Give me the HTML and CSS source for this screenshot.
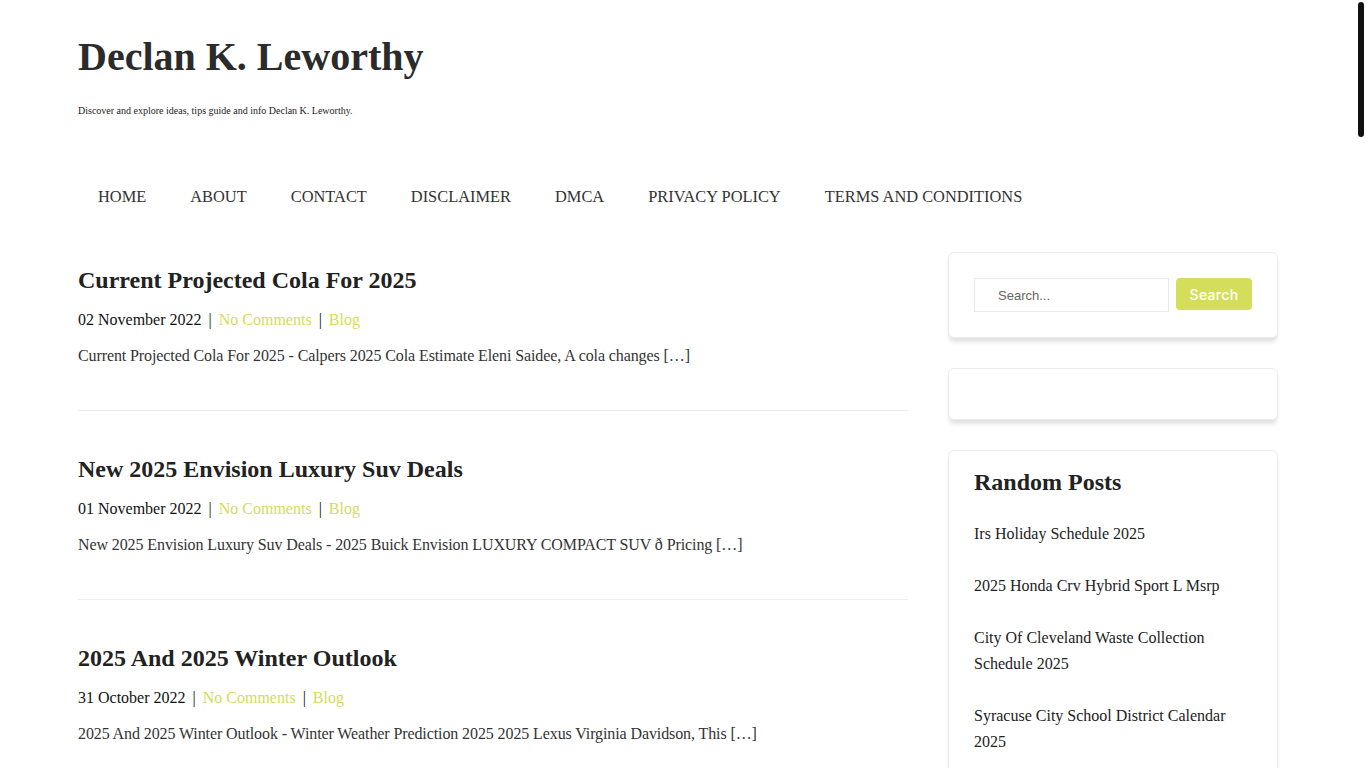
FILE: index.html
```html
<!DOCTYPE html>
<html lang="en">
<head>
<meta charset="utf-8">
<title>Declan K. Leworthy</title>
<link rel="stylesheet" href="styles.css">
</head>
<body>
<div class="scroll-thumb" aria-hidden="true"></div>
<div class="container">
  <header class="site-header">
    <h1 class="site-title">Declan K. Leworthy</h1>
    <p class="site-desc">Discover and explore ideas, tips guide and info Declan K. Leworthy.</p>
  </header>
  <nav class="main-nav">
    <ul>
      <li><a href="#">HOME</a></li>
      <li><a href="#">ABOUT</a></li>
      <li><a href="#">CONTACT</a></li>
      <li><a href="#">DISCLAIMER</a></li>
      <li><a href="#">DMCA</a></li>
      <li><a href="#">PRIVACY POLICY</a></li>
      <li><a href="#">TERMS AND CONDITIONS</a></li>
    </ul>
  </nav>
  <div class="content">
    <main class="posts">
      <article class="post">
        <h2 class="post-title">Current Projected Cola For 2025</h2>
        <div class="meta">02 November 2022 <span class="sep">|</span> <a href="#">No Comments</a> <span class="sep">|</span> <a href="#">Blog</a></div>
        <p class="excerpt">Current Projected Cola For 2025 - Calpers 2025 Cola Estimate Eleni Saidee, A cola changes […]</p>
      </article>
      <article class="post">
        <h2 class="post-title">New 2025 Envision Luxury Suv Deals</h2>
        <div class="meta">01 November 2022 <span class="sep">|</span> <a href="#">No Comments</a> <span class="sep">|</span> <a href="#">Blog</a></div>
        <p class="excerpt">New 2025 Envision Luxury Suv Deals - 2025 Buick Envision LUXURY COMPACT SUV ð Pricing […]</p>
      </article>
      <article class="post">
        <h2 class="post-title">2025 And 2025 Winter Outlook</h2>
        <div class="meta">31 October 2022 <span class="sep">|</span> <a href="#">No Comments</a> <span class="sep">|</span> <a href="#">Blog</a></div>
        <p class="excerpt">2025 And 2025 Winter Outlook - Winter Weather Prediction 2025 2025 Lexus Virginia Davidson, This […]</p>
      </article>
      <article class="post">
        <h2 class="post-title">Irs Holiday Schedule 2025</h2>
        <div class="meta">30 October 2022 <span class="sep">|</span> <a href="#">No Comments</a> <span class="sep">|</span> <a href="#">Blog</a></div>
        <p class="excerpt">Irs Holiday Schedule 2025 - Federal Holiday Calendar 2025 Printable, Here is the list […]</p>
      </article>
      <article class="post">
        <h2 class="post-title">2025 Honda Crv Hybrid Sport L Msrp</h2>
        <div class="meta">29 October 2022 <span class="sep">|</span> <a href="#">No Comments</a> <span class="sep">|</span> <a href="#">Blog</a></div>
        <p class="excerpt">2025 Honda Crv Hybrid Sport L Msrp - 2025 Honda CRV Hybrid Sport Touring Review […]</p>
      </article>
      <article class="post">
        <h2 class="post-title">City Of Cleveland Waste Collection Schedule 2025</h2>
        <div class="meta">28 October 2022 <span class="sep">|</span> <a href="#">No Comments</a> <span class="sep">|</span> <a href="#">Blog</a></div>
        <p class="excerpt">City Of Cleveland Waste Collection Schedule 2025 - Recycling and trash pickup dates […]</p>
      </article>
      <article class="post">
        <h2 class="post-title">Syracuse City School District Calendar 2025</h2>
        <div class="meta">27 October 2022 <span class="sep">|</span> <a href="#">No Comments</a> <span class="sep">|</span> <a href="#">Blog</a></div>
        <p class="excerpt">Syracuse City School District Calendar 2025 - School year dates and holidays […]</p>
      </article>
      <article class="post">
        <h2 class="post-title">Best Family Cars Of 2025</h2>
        <div class="meta">26 October 2022 <span class="sep">|</span> <a href="#">No Comments</a> <span class="sep">|</span> <a href="#">Blog</a></div>
        <p class="excerpt">Best Family Cars Of 2025 - Top picks for space, safety and value […]</p>
      </article>
      <article class="post">
        <h2 class="post-title">2025 Toyota Camry Release Date</h2>
        <div class="meta">25 October 2022 <span class="sep">|</span> <a href="#">No Comments</a> <span class="sep">|</span> <a href="#">Blog</a></div>
        <p class="excerpt">2025 Toyota Camry Release Date - All new redesign expected to arrive […]</p>
      </article>
      <article class="post">
        <h2 class="post-title">Social Security Increase 2025 Estimate</h2>
        <div class="meta">24 October 2022 <span class="sep">|</span> <a href="#">No Comments</a> <span class="sep">|</span> <a href="#">Blog</a></div>
        <p class="excerpt">Social Security Increase 2025 Estimate - What retirees can expect next year […]</p>
      </article>
      <article class="post">
        <h2 class="post-title">2025 Ford Bronco Raptor Price</h2>
        <div class="meta">23 October 2022 <span class="sep">|</span> <a href="#">No Comments</a> <span class="sep">|</span> <a href="#">Blog</a></div>
        <p class="excerpt">2025 Ford Bronco Raptor Price - Pricing, trims and specifications […]</p>
      </article>
      <article class="post">
        <h2 class="post-title">Nfl Draft 2025 Location</h2>
        <div class="meta">22 October 2022 <span class="sep">|</span> <a href="#">No Comments</a> <span class="sep">|</span> <a href="#">Blog</a></div>
        <p class="excerpt">Nfl Draft 2025 Location - Host city announced for the upcoming draft […]</p>
      </article>
      <article class="post">
        <h2 class="post-title">2025 Calendar With Holidays Printable</h2>
        <div class="meta">21 October 2022 <span class="sep">|</span> <a href="#">No Comments</a> <span class="sep">|</span> <a href="#">Blog</a></div>
        <p class="excerpt">2025 Calendar With Holidays Printable - Free monthly templates […]</p>
      </article>
      <article class="post">
        <h2 class="post-title">Chinese New Year 2025 Animal</h2>
        <div class="meta">20 October 2022 <span class="sep">|</span> <a href="#">No Comments</a> <span class="sep">|</span> <a href="#">Blog</a></div>
        <p class="excerpt">Chinese New Year 2025 Animal - The year of the snake begins […]</p>
      </article>
      <article class="post">
        <h2 class="post-title">2025 Kia Telluride Redesign</h2>
        <div class="meta">19 October 2022 <span class="sep">|</span> <a href="#">No Comments</a> <span class="sep">|</span> <a href="#">Blog</a></div>
        <p class="excerpt">2025 Kia Telluride Redesign - Exterior and interior changes […]</p>
      </article>
      <article class="post">
        <h2 class="post-title">Fafsa Deadline 2025 2026</h2>
        <div class="meta">18 October 2022 <span class="sep">|</span> <a href="#">No Comments</a> <span class="sep">|</span> <a href="#">Blog</a></div>
        <p class="excerpt">Fafsa Deadline 2025 2026 - Important dates for students […]</p>
      </article>
      <article class="post">
        <h2 class="post-title">2025 Gmc Sierra Denali Ultimate</h2>
        <div class="meta">17 October 2022 <span class="sep">|</span> <a href="#">No Comments</a> <span class="sep">|</span> <a href="#">Blog</a></div>
        <p class="excerpt">2025 Gmc Sierra Denali Ultimate - Luxury pickup features […]</p>
      </article>
      <article class="post">
        <h2 class="post-title">Easter Sunday 2025 Date</h2>
        <div class="meta">16 October 2022 <span class="sep">|</span> <a href="#">No Comments</a> <span class="sep">|</span> <a href="#">Blog</a></div>
        <p class="excerpt">Easter Sunday 2025 Date - When Easter falls next year […]</p>
      </article>
      <article class="post">
        <h2 class="post-title">2025 Subaru Outback Wilderness</h2>
        <div class="meta">15 October 2022 <span class="sep">|</span> <a href="#">No Comments</a> <span class="sep">|</span> <a href="#">Blog</a></div>
        <p class="excerpt">2025 Subaru Outback Wilderness - Off-road ready wagon […]</p>
      </article>
      <article class="post">
        <h2 class="post-title">Federal Pay Raise 2025 Chart</h2>
        <div class="meta">14 October 2022 <span class="sep">|</span> <a href="#">No Comments</a> <span class="sep">|</span> <a href="#">Blog</a></div>
        <p class="excerpt">Federal Pay Raise 2025 Chart - GS pay scale tables […]</p>
      </article>
    </main>
    <aside class="sidebar">
      <div class="widget search-widget">
        <form class="search-form">
          <input class="search-input" type="text" placeholder="Search...">
          <button class="search-btn" type="button">Search</button>
        </form>
      </div>
      <div class="widget empty-widget"></div>
      <div class="widget random-widget">
        <h3 class="widget-title">Random Posts</h3>
        <ul class="random-list">
          <li><a href="#">Irs Holiday Schedule 2025</a></li>
          <li><a href="#">2025 Honda Crv Hybrid Sport L Msrp</a></li>
          <li><a href="#">City Of Cleveland Waste Collection Schedule 2025</a></li>
          <li><a href="#">Syracuse City School District Calendar 2025</a></li>
          <li><a href="#">Best Family Cars Of 2025</a></li>
        </ul>
      </div>
    </aside>
  </div>
</div>
</body>
</html>
```
FILE: styles.css
```css
html {
  background: #fff;
}
body {
  margin: 0 10px 0 0;
  font-family: "Liberation Serif", "Times New Roman", serif;
  color: #222;
  background: #fff;
}
a {
  text-decoration: none;
}
.scroll-thumb {
  position: fixed;
  top: 2px;
  right: 2px;
  width: 6px;
  height: 135px;
  background: #111;
  border-radius: 3px;
  z-index: 10;
}
.container {
  width: 1200px;
  margin: 0 auto;
}
.site-header {
  padding-top: 34px;
}
.site-title {
  margin: 0;
  font-size: 40px;
  line-height: 46px;
  font-weight: bold;
  color: #2b2b2b;
}
.site-desc {
  margin: 24px 0 0;
  font-size: 10px;
  line-height: 14px;
  color: #222;
}
.main-nav {
  margin-top: 67px;
}
.main-nav ul {
  list-style: none;
  margin: 0 0 0 -2px;
  padding: 0;
  display: flex;
}
.main-nav li a {
  display: block;
  padding: 0 22px;
  line-height: 24px;
  font-size: 16.4px;
  color: #333;
}
.content {
  display: flex;
  gap: 40px;
  margin-top: 42px;
  align-items: flex-start;
}
.posts {
  width: 830px;
  flex: none;
}
.post {
  padding: 14px 0 42px;
  border-bottom: 1px solid #eeeeee;
  margin-bottom: 29px;
}
.post-title {
  margin: 0;
  font-size: 24px;
  line-height: 30px;
  font-weight: bold;
  color: #222;
}
.meta {
  margin-top: 13px;
  font-size: 16px;
  line-height: 24px;
  color: #111;
}
.meta a {
  color: #d3dc5a;
}
.meta .sep {
  margin: 0 3px;
  color: #111;
}
.excerpt {
  margin: 12px 0 0;
  font-size: 16px;
  line-height: 24px;
  letter-spacing: -0.1px;
  color: #333;
}
.sidebar {
  width: 330px;
  flex: none;
  margin-top: 1px;
  display: flex;
  flex-direction: column;
  gap: 30px;
}
.widget {
  border: 1px solid #ececec;
  border-radius: 6px;
  background: #fff;
  box-shadow: 0 5px 4px -1px rgba(0, 0, 0, 0.12);
  box-sizing: border-box;
}
.search-widget {
  padding: 25px;
  height: 86px;
}
.search-form {
  display: flex;
  gap: 7px;
  align-items: flex-start;
}
.search-input {
  width: 195px;
  height: 34px;
  box-sizing: border-box;
  border: 1px solid #ebebeb;
  padding: 0 0 0 23px;
  font-family: "Liberation Sans", Arial, sans-serif;
  font-size: 13px;
  color: #333;
  outline: none;
}
.search-input::placeholder {
  color: #666;
}
.search-btn {
  width: 76px;
  height: 32px;
  border: none;
  border-radius: 4px;
  background: #d4de5a;
  color: #fff;
  font-family: Inter, "Liberation Sans", sans-serif;
  font-size: 14px;
  font-weight: 500;
  letter-spacing: 0.3px;
  padding: 0;
}
.empty-widget {
  height: 52px;
}
.random-widget {
  padding: 16px 25px 10px;
}
.widget-title {
  margin: 0;
  font-size: 24px;
  line-height: 30px;
  font-weight: bold;
  color: #222;
}
.random-list {
  list-style: none;
  margin: 24px 0 0;
  padding: 0;
}
.random-list li {
  margin-bottom: 26px;
  font-size: 16px;
  line-height: 26px;
}
.random-list a {
  color: #222;
}
```
